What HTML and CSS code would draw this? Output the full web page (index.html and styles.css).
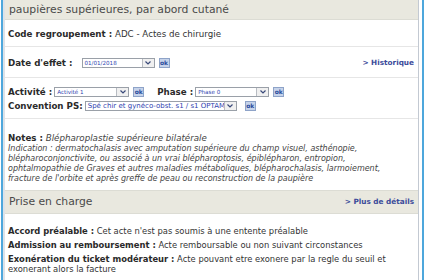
FILE: index.html
```html
<!DOCTYPE html>
<html lang="fr">
<head>
    <meta charset="UTF-8">
    <title>Acte - Fiche</title>
    <link rel="stylesheet" href="styles.css">
</head>
<body>
<div class="frame">
    <div class="panel">
        <div class="band">paupières supérieures, par abord cutané</div>

        <div class="row row-code">
            <b>Code regroupement :</b>&nbsp;ADC - Actes de chirurgie
        </div>

        <div class="row row-date">
            <b>Date d'effet :</b>
            <span class="select sel-date"><span class="val">01/01/2018</span><span class="arrow"><svg width="6" height="4" viewBox="0 0 6 4"><path d="M0.5 0.5 L3 3 L5.5 0.5" fill="none" stroke="#3a4a7a" stroke-width="1.2"/></svg></span></span>
            <span class="ok">ok</span>
            <a class="link" href="#">&gt; Historique</a>
        </div>

        <div class="row row-act">
            <div class="line">
                <b>Activité :</b>
                <span class="select sel-act"><span class="val">Activité 1</span><span class="arrow"><svg width="6" height="4" viewBox="0 0 6 4"><path d="M0.5 0.5 L3 3 L5.5 0.5" fill="none" stroke="#3a4a7a" stroke-width="1.2"/></svg></span></span>
                <span class="ok">ok</span>
                <b class="lbl-phase">Phase :</b>
                <span class="select sel-phase"><span class="val">Phase 0</span><span class="arrow"><svg width="6" height="4" viewBox="0 0 6 4"><path d="M0.5 0.5 L3 3 L5.5 0.5" fill="none" stroke="#3a4a7a" stroke-width="1.2"/></svg></span></span>
                <span class="ok">ok</span>
            </div>
            <div class="line">
                <b>Convention PS:</b>
                <span class="select sel-conv"><span class="val val-conv">Spé chir et gynéco-obst. s1 / s1 OPTAM</span><span class="arrow"><svg width="6" height="4" viewBox="0 0 6 4"><path d="M0.5 0.5 L3 3 L5.5 0.5" fill="none" stroke="#3a4a7a" stroke-width="1.2"/></svg></span></span>
                <span class="ok ok-conv">ok</span>
            </div>
        </div>

        <div class="row row-notes">
            <p class="notes"><b>Notes :</b> <i>Blépharoplastie supérieure bilatérale</i></p>
            <p class="indication">Indication : dermatochalasis avec amputation supérieure du champ visuel, asthénopie,<br>blépharoconjonctivite, ou associé à un vrai blépharoptosis, épiblépharon, entropion,<br>ophtalmopathie de Graves et autres maladies métaboliques, blépharochalasis, larmoiement,<br>fracture de l'orbite et après greffe de peau ou reconstruction de la paupière</p>
        </div>

        <div class="band band-prise">
            <span>Prise en charge</span>
            <a class="link" href="#">&gt; Plus de détails</a>
        </div>

        <div class="prise">
            <p><b>Accord préalable :</b> Cet acte n'est pas soumis à une entente préalable</p>
            <p><b>Admission au remboursement :</b> Acte remboursable ou non suivant circonstances</p>
            <p><b>Exonération du ticket modérateur :</b> Acte pouvant etre exonere par la regle du seuil et<br>exonerant alors la facture</p>
        </div>
    </div>
</div>
</body>
</html>
```

FILE: styles.css
```css
body {
    margin: 0;
    background-color: #ffffff;
    font-family: "DejaVu Sans", Verdana, sans-serif;
    font-size: 8.7px;
    color: #333333;
}

.frame {
    margin-left: 1px;
    width: 423px;
    height: 280px;
    box-sizing: border-box;
    border-left: 2px solid #4ea7dc;
    border-right: 2px solid #4ea7dc;
    overflow: hidden;
}

.panel {
    margin-right: 3px;
    height: 100%;
    border-left: 2px solid #dde2e8;
    border-right: 1px solid #c3c9d2;
    background-color: #ffffff;
}

.band {
    height: 19px;
    padding: 0 4px 0 4px;
    background-color: #e9e8df;
    border-bottom: 1px solid #dcdcd4;
    color: #4a4a4a;
    font-size: 10.8px;
    line-height: 19px;
}

.row {
    padding: 0 4px 0 3px;
    border-bottom: 1px solid #e6e6e6;
}

.row b {
    color: #2a2a2a;
}

.row-code {
    height: 26px;
    line-height: 29px;
}

.row-date {
    height: 31px;
    display: flex;
    align-items: center;
    padding-top: 1px;
    box-sizing: border-box;
}

.row-date b {
    margin-right: 9px;
}

.row-act {
    height: 41px;
    display: flex;
    flex-direction: column;
    justify-content: center;
    gap: 4px;
    padding-top: 2px;
    box-sizing: border-box;
}

.line {
    display: flex;
    align-items: center;
    height: 10px;
}

.line b {
    margin-right: 2px;
}

.select {
    display: inline-flex;
    flex: none;
    align-items: center;
    height: 10px;
    box-sizing: border-box;
    border: 1px solid #9aa0a8;
    background-color: #ffffff;
}

.select .val {
    flex: 1;
    min-width: 0;
    overflow: hidden;
    white-space: nowrap;
    font-size: 5.6px;
    color: #2f3fb0;
    padding-left: 2px;
    line-height: 8px;
}

.select .val-conv {
    font-size: 7px;
}

.select .arrow {
    width: 11px;
    height: 8px;
    border-left: 1px solid #b8bcc2;
    background-color: #f0f0f0;
    display: flex;
    align-items: center;
    justify-content: center;
}

.sel-date {
    width: 73px;
}

.sel-act {
    width: 75px;
}

.sel-phase {
    width: 74px;
}

.sel-conv {
    width: 152px;
}

.ok {
    display: inline-block;
    flex: none;
    width: 11px;
    height: 10px;
    margin-left: 4px;
    box-sizing: border-box;
    background-color: #c6d3ea;
    border: 1px solid #8ea3c8;
    color: #2a4c9c;
    font-size: 6px;
    font-weight: bold;
    line-height: 8px;
    text-align: center;
}

.ok-conv {
    margin-left: 8px;
}

.lbl-phase {
    margin-left: 13px;
}

.link {
    margin-left: auto;
    color: #3b4b9a;
    font-size: 7.3px;
    font-weight: bold;
    text-decoration: none;
}

.row-notes {
    height: 70px;
    border-bottom: none;
    padding-top: 13px;
    box-sizing: border-box;
}

.row-notes p {
    margin: 0;
}

.notes {
    line-height: 12px;
}

.notes i {
    color: #444444;
}

.indication {
    font-size: 8px;
    font-style: italic;
    color: #444444;
    line-height: 10px;
}

.band-prise {
    height: 22px;
    line-height: 22px;
    margin-top: 1px;
    display: flex;
    border-top: 1px solid #dcdcd4;
}

.prise {
    padding: 12px 4px 0 3px;
    font-size: 8.4px;
}

.prise p {
    margin: 0 0 4px 0;
    line-height: 10px;
}

.prise b {
    color: #2a2a2a;
}
```
